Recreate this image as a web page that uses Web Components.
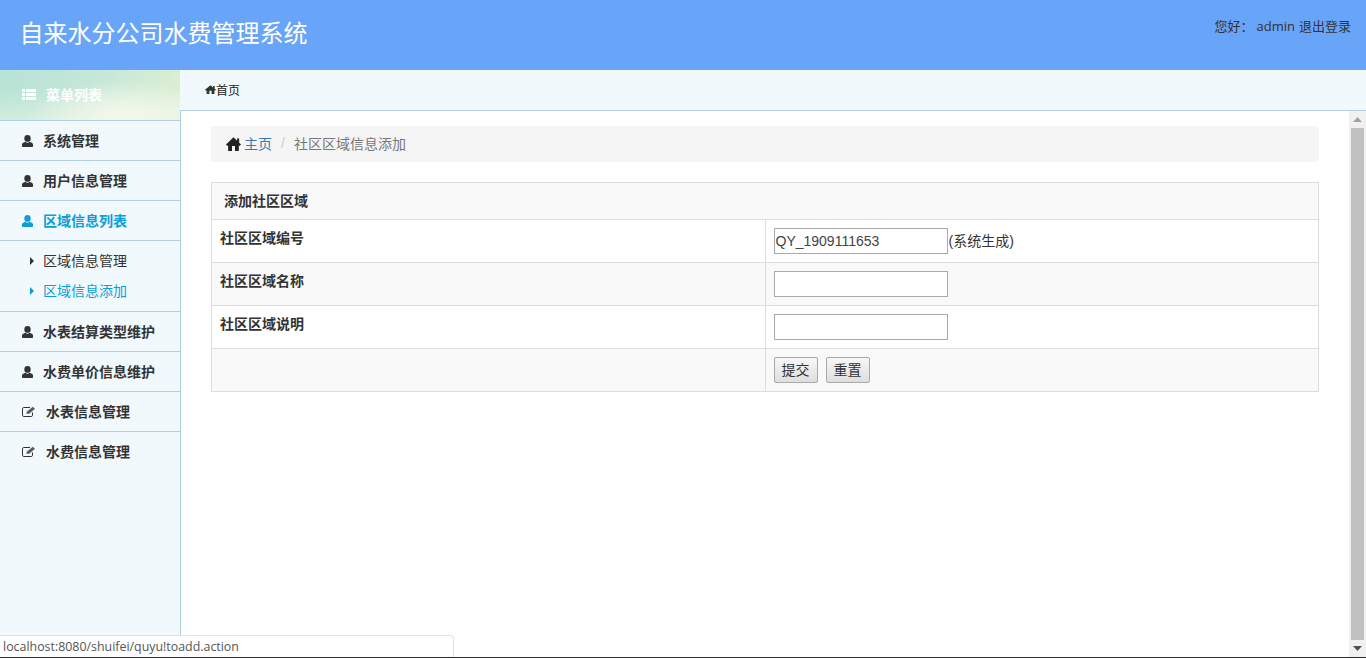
<!DOCTYPE html>
<html lang="zh">
<head>
<meta charset="utf-8">
<title>自来水分公司水费管理系统</title>
<style>
 html, body { margin: 0; height: 100%; overflow: hidden; background: #fff; }
 body { font: 14px "Liberation Sans", "Noto Sans CJK SC", sans-serif; color: #333; }
</style>
</head>
<body>
<water-app></water-app>
<script>
const ICONOS = {
 user: `<svg viewBox="0 0 11 12" width="11" height="12"><ellipse cx="5.500" cy="3.400" rx="3.200" ry="3.400" fill="currentColor"/><path d="M0 11V9.300C0 8 1.900 7.300 3.500 6.800 4 7.400 4.700 7.700 5.500 7.700s1.500-.3 2-.9C9.100 7.300 11 8 11 9.300V11c0 .6-.4 1-1 1H1c-.6 0-1-.4-1-1z" fill="currentColor"/></svg>`,
 list: `<svg viewBox="0 0 14 11" width="14" height="11"><path d="M0 0h3v3H0zM4 0h10v3H4zM0 4h3v3H0zM4 4h10v3H4zM0 8h3v3H0zM4 8h10v3H4z" fill="currentColor"/></svg>`,
 edit: `<svg viewBox="0 0 14 11" width="14" height="11"><path d="M10.500 6.500v2.700c0 .8-.5 1.300-1.300 1.300H1.800C1 10.500.5 10 .5 9.200V2.800C.5 2 1 1.500 1.800 1.500H8" fill="none" stroke="currentColor" stroke-width="1"/><path d="M4.300 7.700 5 5.600 10.800.7l2.200 2.100-5.800 4.900z" fill="currentColor" opacity=".8"/></svg>`,
 home: `<svg viewBox="0 0 14 12.300" width="100%" height="100%" preserveAspectRatio="none"><path d="M7 .3 10.300 3.300V1.300h2V5.100L14 6.600 13 7.600H12V12.300H8.400V8H5.600V12.300H2V7.600H1L0 6.600z" fill="currentColor"/></svg>`,
 tri: `<svg viewBox="0 0 4 8" width="4" height="8"><path d="M0 0 4 4 0 8z" fill="currentColor"/></svg>`
}

class UiIcono extends HTMLElement {
 connectedCallback() {
  const shadowRoot = this.attachShadow({ mode: "open" })
  shadowRoot.innerHTML = `<style>
    :host { display: inline-flex; align-items: center; justify-content: center; flex: none; }
    svg { display: block; }
   </style>${ICONOS[this.getAttribute("name")] || ""}`
 }
}
customElements.define("ui-icono", UiIcono)

class AppCabecera extends HTMLElement {
 connectedCallback() {
  const shadowRoot = this.attachShadow({ mode: "open" })
  shadowRoot.innerHTML = `<style>
    :host {
     display: flex;
     justify-content: space-between;
     height: 70px;
     background: #68a4f8;
     padding: 0 15px 0 19.500px;
    }
    h1 { margin: 0; font-size: 24px; font-weight: 400; line-height: 68px; color: #fff; }
    div { font: 13px/52px "Open Sans", "Noto Sans CJK SC", sans-serif; color: #333; white-space: pre; }
    span { margin-left: 3px; margin-right: 4px; }
   </style>
   <h1>自来水分公司水费管理系统</h1>
   <div>您好：<span>admin</span>退出登录</div>`
 }
}
customElements.define("app-cabecera", AppCabecera)

class MenuGrupo extends HTMLElement {
 connectedCallback() {
  const activo = this.hasAttribute("activo")
  const icono = this.getAttribute("icono") || "user"
  const shadowRoot = this.attachShadow({ mode: "open" })
  shadowRoot.innerHTML = `<style>
    :host { display: block; border-bottom: 1px solid #b3d0de; }
    :host(:last-child) { border-bottom: 0; }
    .fila {
     display: flex;
     align-items: center;
     box-sizing: border-box;
     height: 39px;
     padding: 0 0 2px 22px;
     font-weight: 700;
     color: ${activo ? "#0a9fd8" : "#333"};
    }
    ui-icono { margin-top: ${icono === "edit" ? "1px" : "3px"}; }
    .fila span { margin-left: 10px; }
    .hijos { display: block; border-top: 1px solid #b3d0de; padding: 5px 0; }
    .hijos:not(.con) { display: none; }
   </style>
   <div class="fila"><ui-icono name="${icono}"></ui-icono><span>${this.getAttribute("texto")}</span></div>
   <div class="hijos ${this.children.length ? "con" : ""}"><slot></slot></div>`
 }
}
customElements.define("menu-grupo", MenuGrupo)

class MenuHijo extends HTMLElement {
 connectedCallback() {
  const shadowRoot = this.attachShadow({ mode: "open" })
  shadowRoot.innerHTML = `<style>
    :host {
     display: flex;
     align-items: center;
     box-sizing: border-box;
     height: 30px;
     padding: 0 0 2px 30px;
     color: ${this.hasAttribute("activo") ? "#0a9fd8" : "#333"};
    }
    ui-icono { margin-top: 2px; }
    span { margin-left: 9px; }
   </style>
   <ui-icono name="tri"></ui-icono><span><slot></slot></span>`
 }
}
customElements.define("menu-hijo", MenuHijo)

class MenuLateral extends HTMLElement {
 connectedCallback() {
  const shadowRoot = this.attachShadow({ mode: "open" })
  shadowRoot.innerHTML = `<style>
    :host { display: block; width: 180px; flex: none; background: #f1f9fd; }
    .titulo {
     display: flex;
     align-items: center;
     height: 48px;
     padding: 0 0 2px 22px;
     color: #fff;
     font-weight: 700;
     border-bottom: 1px solid #b3d0de;
     background:
      radial-gradient(100px 40px at 125px 50px, #f0f7e9 25%, rgba(240,247,233,0) 100%),
      linear-gradient(to bottom, rgba(240,248,235,0) 40%, rgba(240,248,235,.45) 100%),
      linear-gradient(100deg, #b8e3d5 0%, #c4e7d8 50%, #dcefd2 100%);
    }
    ui-icono { margin-top: 1px; }
    .titulo span { margin-left: 10px; }
   </style>
   <div class="titulo"><ui-icono name="list"></ui-icono><span>菜单列表</span></div>
   <slot></slot>`
 }
}
customElements.define("menu-lateral", MenuLateral)

class BarraMigas extends HTMLElement {
 connectedCallback() {
  const shadowRoot = this.attachShadow({ mode: "open" })
  shadowRoot.innerHTML = `<style>
    :host {
     display: flex;
     align-items: center;
     box-sizing: border-box;
     height: 36px;
     padding: 0 0 2px 15px;
     margin-bottom: 20px;
     background: #f5f5f5;
     border-radius: 4px;
     color: #777;
    }
    ui-icono { width: 15px; height: 14px; color: #222; margin: 2px 3px 0 0; }
    a { color: #337ab7; text-decoration: none; }
    i { font-style: normal; color: #ccc; margin: 0 9px; }
   </style>
   <ui-icono name="home"></ui-icono><a href="#">主页</a><i>/</i><span>社区区域信息添加</span>`
 }
}
customElements.define("barra-migas", BarraMigas)

class FormRegion extends HTMLElement {
 connectedCallback() {
  const shadowRoot = this.attachShadow({ mode: "open" })
  shadowRoot.innerHTML = `<style>
    :host { display: block; }
    table { width: 1108px; border-collapse: collapse; table-layout: fixed; font-size: 14px; line-height: 20px; }
    th, td { border: 1px solid #ddd; padding: 8px; text-align: left; vertical-align: top; height: 26px; }
    thead th { background: #f9f9f9; padding: 8px 12px; height: 20px; }
    tbody tr:nth-child(even) td { background: #f9f9f9; }
    td:first-child { font-weight: 700; width: 537px; }
    .control { display: flex; align-items: center; height: 26px; }
    .nota { margin-left: 1px; }
    input {
     box-sizing: border-box;
     width: 174px;
     height: 26px;
     margin: 0;
     padding: 1px;
     border: 1px solid #a9a9a9;
     background: #fff;
     color: #444;
     font: 14px "Liberation Sans", "Noto Sans CJK SC", sans-serif;
     outline: 0;
    }
    button {
     box-sizing: border-box;
     width: 44px;
     height: 26px;
     margin: 0 8px 0 0;
     padding: 0 0 2px;
     border: 1px solid #aaa;
     border-radius: 2px;
     background: linear-gradient(#f7f7f7, #dedede);
     color: #333;
     font: 14px "Liberation Sans", "Noto Sans CJK SC", sans-serif;
    }
   </style>
   <table>
    <thead><tr><th colspan="2">添加社区区域</th></tr></thead>
    <tbody>
     <tr><td>社区区域编号</td><td><div class="control"><input value="QY_1909111653"><span class="nota">(系统生成)</span></div></td></tr>
     <tr><td>社区区域名称</td><td><div class="control"><input></div></td></tr>
     <tr><td>社区区域说明</td><td><div class="control"><input></div></td></tr>
     <tr><td></td><td><div class="control"><button type="button">提交</button><button type="button">重置</button></div></td></tr>
    </tbody>
   </table>`
 }
}
customElements.define("form-region", FormRegion)

class BarraDesplazo extends HTMLElement {
 connectedCallback() {
  const shadowRoot = this.attachShadow({ mode: "open" })
  shadowRoot.innerHTML = `<style>
    :host {
     display: flex;
     flex-direction: column;
     align-items: center;
     width: 17px;
     flex: none;
     background: #f1f1f1;
    }
    .flecha { height: 17px; flex: none; display: flex; align-items: center; justify-content: center; }
    .pulgar { flex: 1; width: 13px; background: #c1c1c1; }
    svg { display: block; }
   </style>
   <div class="flecha"><svg width="9" height="5" viewBox="0 0 9 5"><path d="M4.500 0 9 5H0z" fill="#a3a3a3"/></svg></div>
   <div class="pulgar"></div>
   <div class="flecha"><svg width="9" height="5" viewBox="0 0 9 5"><path d="M0 0h9L4.500 5z" fill="#505050"/></svg></div>`
 }
}
customElements.define("barra-desplazo", BarraDesplazo)

class WaterApp extends HTMLElement {
 connectedCallback() {
  const shadowRoot = this.attachShadow({ mode: "open" })
  shadowRoot.innerHTML = `<style>
    :host { display: flex; flex-direction: column; height: 658px; position: relative; overflow: hidden; }
    .cuerpo { display: flex; flex: 1; min-height: 0; background: #f1f9fd; }
    .derecha { display: flex; flex-direction: column; flex: 1; min-width: 0; }
    .pestanas {
     display: flex;
     align-items: center;
     height: 38px;
     flex: none;
     padding: 0 0 2px 25px;
     font-size: 12px;
     color: #222;
     border-bottom: 1px solid #b3d0de;
    }
    .pestanas ui-icono { width: 11px; height: 9px; color: #333; margin-top: 1px; }
    .panel { display: flex; flex: 1; min-height: 0; background: #fff; border-left: 1px solid #b3d0de; }
    .contenido { flex: 1; min-width: 0; padding: 15px 30px; }
    .pie { height: 1px; flex: none; background: #2b2b2b; }
    .estado {
     position: absolute;
     left: 0;
     bottom: 1px;
     box-sizing: border-box;
     width: 454px;
     height: 22px;
     padding: 2px 0 0 3px;
     background: #fff;
     border: 1px solid #e0e4e6;
     border-width: 1px 1px 0 0;
     border-radius: 0 4px 0 0;
     font: 12.400px/18px "Open Sans", "Noto Sans", sans-serif;
     color: #555;
    }
   </style>
   <app-cabecera></app-cabecera>
   <div class="cuerpo">
    <menu-lateral>
     <menu-grupo texto="系统管理"></menu-grupo>
     <menu-grupo texto="用户信息管理"></menu-grupo>
     <menu-grupo texto="区域信息列表" activo>
      <menu-hijo>区域信息管理</menu-hijo>
      <menu-hijo activo>区域信息添加</menu-hijo>
     </menu-grupo>
     <menu-grupo texto="水表结算类型维护"></menu-grupo>
     <menu-grupo texto="水费单价信息维护"></menu-grupo>
     <menu-grupo texto="水表信息管理" icono="edit"></menu-grupo>
     <menu-grupo texto="水费信息管理" icono="edit"></menu-grupo>
    </menu-lateral>
    <div class="derecha">
     <div class="pestanas"><ui-icono name="home"></ui-icono><span>首页</span></div>
     <div class="panel">
      <div class="contenido">
       <barra-migas></barra-migas>
       <form-region></form-region>
      </div>
      <barra-desplazo></barra-desplazo>
     </div>
    </div>
   </div>
   <div class="pie"></div>
   <div class="estado">localhost:8080/shuifei/quyu!toadd.action</div>`
 }
}
customElements.define("water-app", WaterApp)
</script>
</body>
</html>
